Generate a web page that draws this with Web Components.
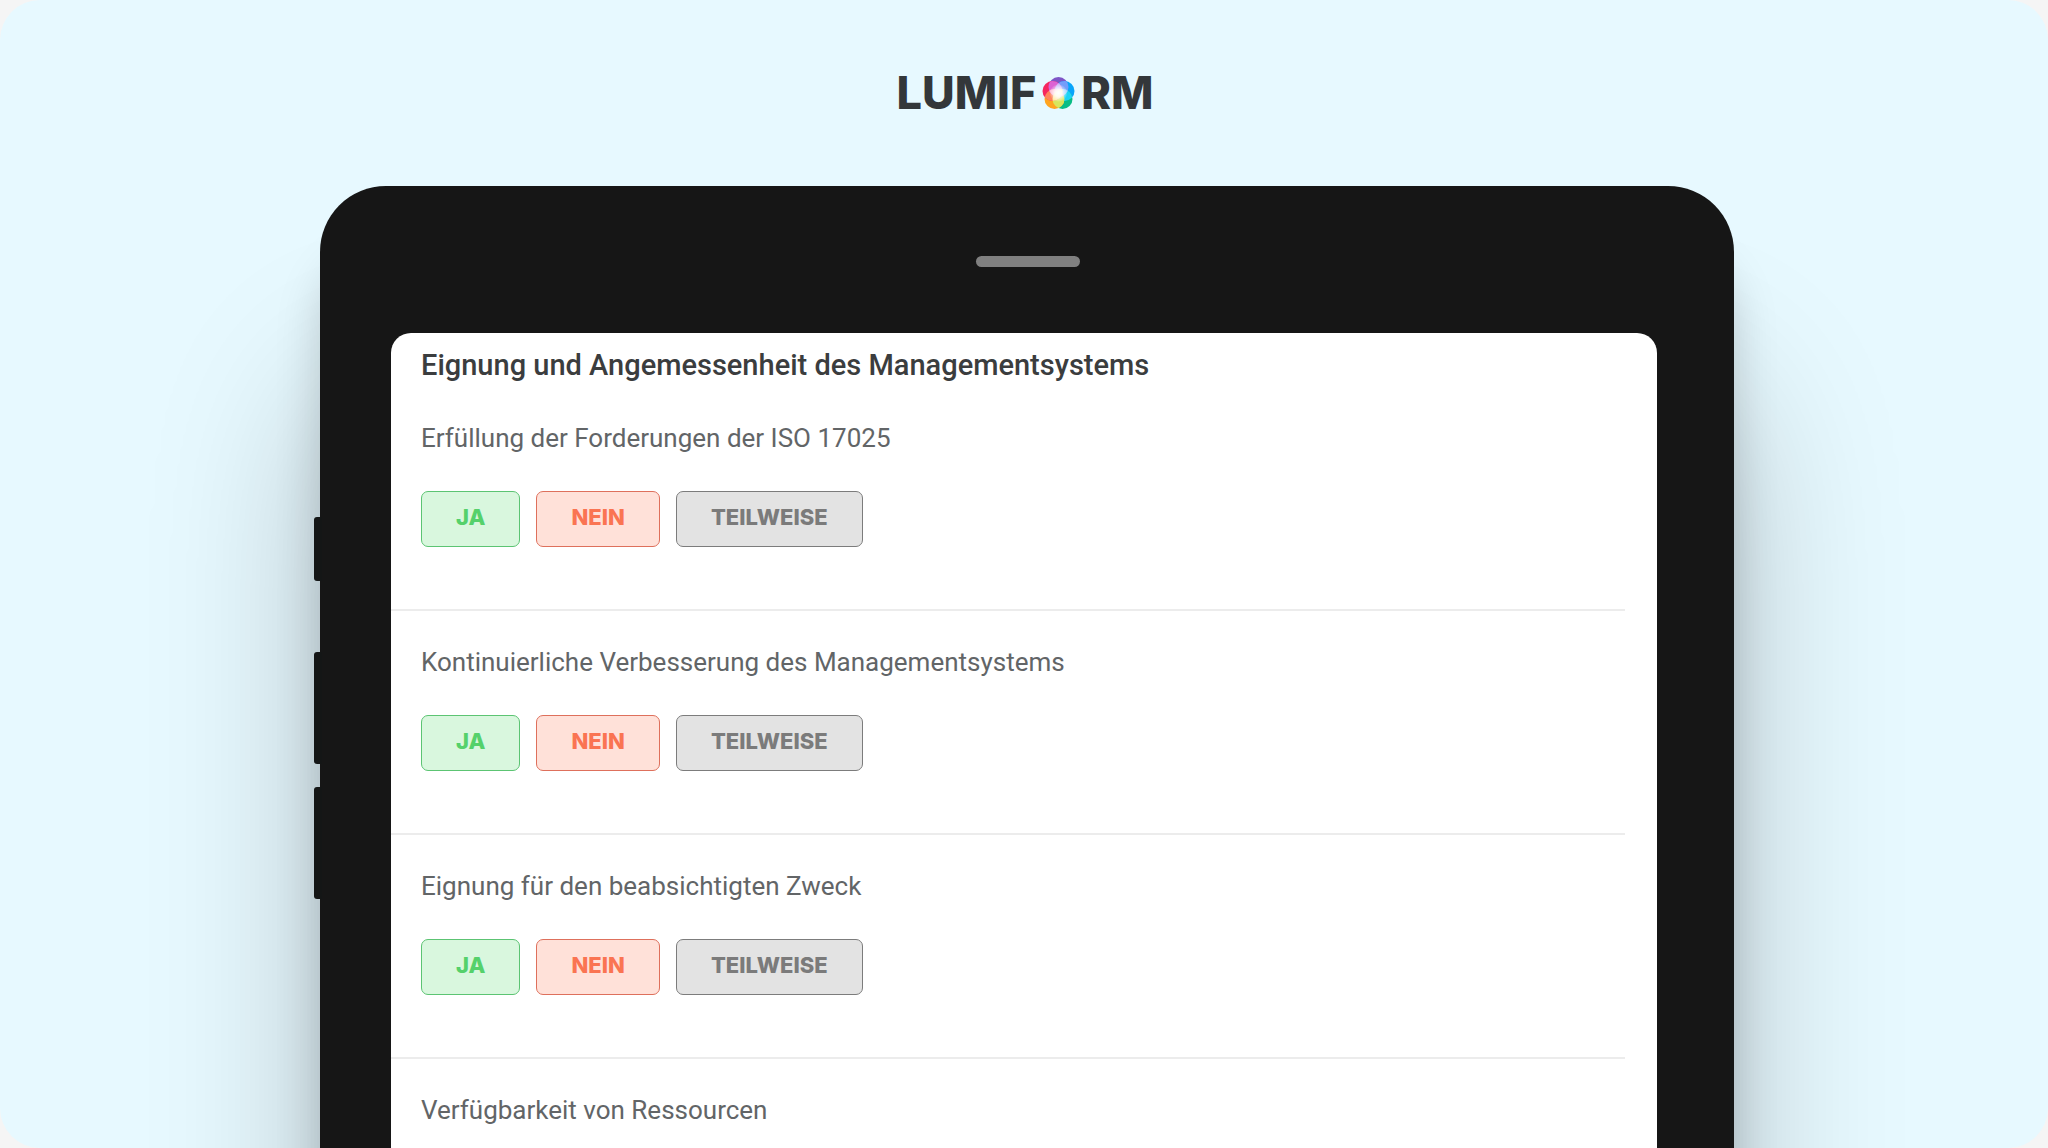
<!DOCTYPE html>
<html lang="de">
<head>
<meta charset="utf-8">
<meta name="viewport" content="width=device-width, initial-scale=1">
<title>Lumiform</title>
<style>
html, body { margin: 0; background: #f5f5f5; }
body { font-family: Roboto, "Liberation Sans", sans-serif; color: #35383a; }
</style>
</head>
<body>
<promo-stage>
  <lumiform-logo slot="brand"></lumiform-logo>
  <tablet-frame>
    <audit-section heading="Eignung und Angemessenheit des Managementsystems">
      <audit-question>Erfüllung der Forderungen der ISO 17025</audit-question>
      <audit-question>Kontinuierliche Verbesserung des Managementsystems</audit-question>
      <audit-question>Eignung für den beabsichtigten Zweck</audit-question>
      <audit-question collapsed>Verfügbarkeit von Ressourcen</audit-question>
    </audit-section>
  </tablet-frame>
</promo-stage>

<template id="stage">
  <style>
    :host { display: flex; flex-direction: column; height: 100vh; box-sizing: border-box; overflow: hidden; background: #e7f9ff; border-radius: 40px; }
    header { display: flex; justify-content: center; align-items: center; height: 186px; flex: none; }
    main { flex: 1; display: flex; min-height: 0; padding: 0 314px 0 320px; }
    ::slotted(tablet-frame) { flex: 1; }
    @media (max-width: 1200px) { main { padding: 0 24px; } }
  </style>
  <header><slot name="brand"></slot></header>
  <main><slot></slot></main>
</template>

<template id="logo">
  <style>
    :host { display: flex; align-items: center; gap: 6px; padding-left: 2px; font: 800 45px/60px Inter, sans-serif; color: #33373a; }
    svg { width: 33px; height: 34px; display: block; }
  </style>
  <span>LUMIF</span>
  <svg viewBox="0 0 32 34" role="img" aria-label="O">
    <circle cx="16" cy="11" r="10" fill="#7d55c7"/>
    <circle cx="22" cy="15" r="10" fill="#08a5fb"/>
    <circle cx="20" cy="23" r="10" fill="#08bd85"/>
    <circle cx="12" cy="23" r="10" fill="#ffa51f"/>
    <circle cx="10" cy="15" r="10" fill="#f5265f"/>
    <g id="overlaps"></g>
  </svg>
  <span>RM</span>
</template>

<template id="tablet">
  <style>
    :host { display: flex; flex-direction: column; position: relative; box-sizing: border-box; padding: 0 77px 0 71px; margin-bottom: -300px; background: #161616; border-radius: 66px;
      box-shadow: 0 70px 45px rgba(0,0,0,.17), 0 200px 170px rgba(0,0,0,.23); }
    .top { display: flex; align-items: center; justify-content: center; height: 147px; flex: none; }
    .speaker { width: 104px; height: 11px; margin: 4px 0 0 8px; border-radius: 6px; background: #808080; }
    .screen { flex: 1; background: #fff; border-radius: 20px; overflow: hidden; }
    .keys { position: absolute; left: -6px; top: 331px; display: flex; flex-direction: column; gap: 23px; }
    .keys i { width: 8px; height: 112px; background: #141616; border-radius: 3px 0 0 3px; }
    .keys i:first-child { height: 64px; margin-bottom: 48px; }
  </style>
  <div class="keys"><i></i><i></i><i></i></div>
  <div class="top"><div class="speaker"></div></div>
  <div class="screen"><slot></slot></div>
</template>

<template id="section">
  <style>
    :host { display: block; padding: 16px 32px 0 0; }
    h1 { margin: 0 0 6px 30px; font-size: 29px; font-weight: 500; line-height: 32px; color: #3b3d3e; }
  </style>
  <h1></h1>
  <slot></slot>
</template>

<template id="question">
  <style>
    :host { display: block; padding: 33px 0 62px 30px; border-bottom: 2px solid #ececec; }
    :host([collapsed]) { border: 0; }
    :host([collapsed]) .answers { display: none; }
    p { margin: 0 0 35px; font-size: 26px; line-height: 36px; color: #626567; }
    .answers { display: flex; flex-wrap: wrap; gap: 16px; }
  </style>
  <p id="label"><slot></slot></p>
  <div class="answers" role="group" aria-labelledby="label">
    <answer-button tone="yes">JA</answer-button>
    <answer-button tone="no">NEIN</answer-button>
    <answer-button tone="partly">TEILWEISE</answer-button>
  </div>
</template>

<template id="answer">
  <style>
    :host { display: block; --ink: #7b7b7b; --line: #7c7c7c; --fill: #e3e3e3; }
    :host([tone="yes"]) { --ink: #55d16b; --line: #5cc473; --fill: #d9f7de; }
    :host([tone="no"]) { --ink: #fa7452; --line: #de705c; --fill: #ffe1d9; }
    button { display: block; box-sizing: border-box; height: 56px; margin: 0; padding: 0 34px 4px; border: 1px solid var(--line); border-radius: 7px; background: var(--fill); color: var(--ink); font: 800 22px/28px Inter, sans-serif; cursor: pointer; }
  </style>
  <button type="button"><slot></slot></button>
</template>

<script>
class Base extends HTMLElement {
  constructor() {
    super();
    this.attachShadow({ mode: "open" })
      .append(document.getElementById(this.constructor.view).content.cloneNode(true));
  }
}
class PromoStage extends Base { static view = "stage"; }
class TabletFrame extends Base { static view = "tablet"; }
class AuditQuestion extends Base { static view = "question"; }
class AnswerButton extends Base { static view = "answer"; }
class AuditSection extends Base {
  static view = "section";
  connectedCallback() {
    this.shadowRoot.querySelector("h1").textContent = this.getAttribute("heading");
  }
}
class LumiformLogo extends Base {
  static view = "logo";
  connectedCallback() {
    // Lighter lens shapes where neighbouring petals cross, fading to a white core.
    this.shadowRoot.getElementById("overlaps").innerHTML = `
      <defs>
        <clipPath id="c1"><circle cx="16" cy="11" r="10"/></clipPath>
        <clipPath id="c2"><circle cx="22" cy="15" r="10"/></clipPath>
        <clipPath id="c3"><circle cx="20" cy="23" r="10"/></clipPath>
        <clipPath id="c4"><circle cx="12" cy="23" r="10"/></clipPath>
        <clipPath id="c5"><circle cx="10" cy="15" r="10"/></clipPath>
        <radialGradient id="core"><stop offset="0" stop-color="#fff"/><stop offset=".4" stop-color="#fff" stop-opacity=".85"/><stop offset="1" stop-color="#fff" stop-opacity="0"/></radialGradient>
      </defs>
      <circle cx="22" cy="15" r="10" fill="#749dfa" clip-path="url(#c1)"/>
      <circle cx="20" cy="23" r="10" fill="#1cd3f5" clip-path="url(#c2)"/>
      <circle cx="12" cy="23" r="10" fill="#d8e65c" clip-path="url(#c3)"/>
      <circle cx="10" cy="15" r="10" fill="#ff845d" clip-path="url(#c4)"/>
      <circle cx="16" cy="11" r="10" fill="#dc62d4" clip-path="url(#c5)"/>
      <g clip-path="url(#c2)"><circle cx="10" cy="15" r="10" fill="#c9b5fa"/></g>
      <g clip-path="url(#c1)"><circle cx="20" cy="23" r="10" fill="#a8d2ff"/><circle cx="12" cy="23" r="10" fill="#ffb9cf"/></g>
      <g clip-path="url(#c3)"><circle cx="10" cy="15" r="10" fill="#ffe89a"/></g>
      <circle cx="16" cy="17" r="9" fill="url(#core)"/>`;
  }
}
customElements.define("promo-stage", PromoStage);
customElements.define("lumiform-logo", LumiformLogo);
customElements.define("tablet-frame", TabletFrame);
customElements.define("audit-section", AuditSection);
customElements.define("audit-question", AuditQuestion);
customElements.define("answer-button", AnswerButton);
</script>
</body>
</html>
